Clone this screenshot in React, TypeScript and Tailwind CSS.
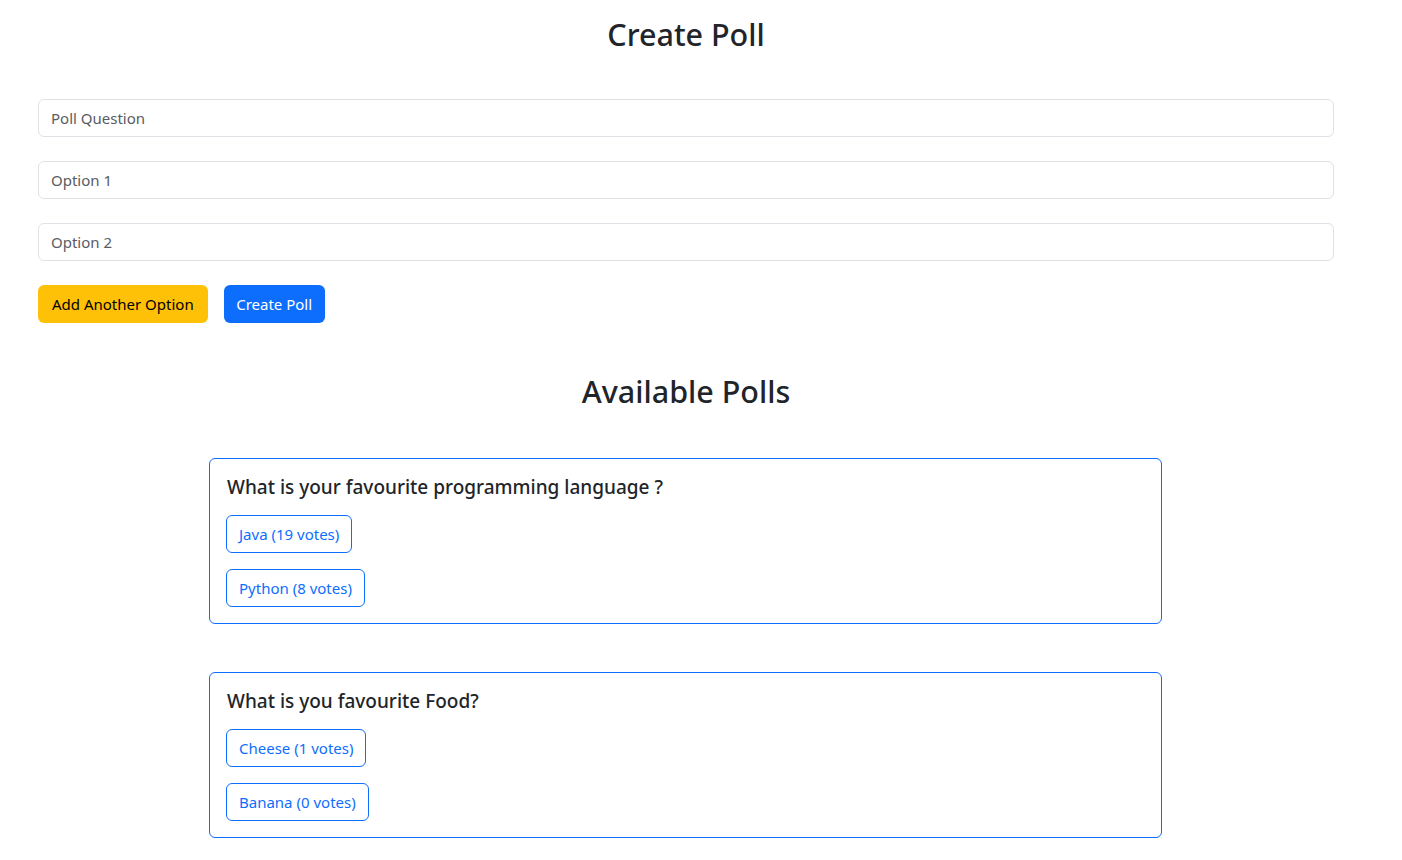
import React from "react";

const polls = [
  {
    question: "What is your favourite programming language ?",
    options: [
      { label: "Java", votes: 19 },
      { label: "Python", votes: 8 },
    ],
  },
  {
    question: "What is you favourite Food?",
    options: [
      { label: "Cheese", votes: 1 },
      { label: "Banana", votes: 0 },
    ],
  },
];

export default function App() {
  return (
    <div
      className="w-[1372px] bg-white text-[#212529]"
      style={{ fontFamily: '"Noto Sans", "Open Sans", sans-serif' }}
    >
      <div className="mx-auto max-w-[1320px] px-3 pb-6">
        <h2 className="mt-[15px] text-center text-[30.5px] font-medium leading-[38px]">Create Poll</h2>

        <div className="mt-[46px] flex flex-col gap-6">
          {["Poll Question", "Option 1", "Option 2"].map((p) => (
            <input
              key={p}
              placeholder={p}
              className="h-[38px] w-full rounded-[6px] border border-[#dee2e6] px-3 text-[15px] text-[#212529] outline-none placeholder:text-[#595c5f]"
            />
          ))}
        </div>

        <div className="mt-6 flex gap-4">
          <button className="h-[38px] rounded-[6px] bg-[#ffc107] px-[14px] text-[15px] text-black">
            Add Another Option
          </button>
          <button className="h-[38px] rounded-[6px] bg-[#0d6efd] px-[12.5px] text-[15px] text-white">
            Create Poll
          </button>
        </div>

        <h2 className="mt-[49px] text-center text-[30.5px] font-medium leading-[38px]">Available Polls</h2>

        {polls.map((poll) => (
          <div
            key={poll.question}
            className="ml-[171px] mt-[48px] w-[953px] rounded-[6px] border border-[#0d6efd] p-4"
          >
            <h5 className="pl-px text-[19px] font-medium leading-6">{poll.question}</h5>
            <div className="mt-4 flex flex-col items-start gap-4">
              {poll.options.map((o) => (
                <button
                  key={o.label}
                  className="h-[38px] rounded-[6px] border border-[#0d6efd] px-3 text-[15px] text-[#0d6efd]"
                >
                  {o.label} ({o.votes} votes)
                </button>
              ))}
            </div>
          </div>
        ))}
      </div>
    </div>
  );
}
